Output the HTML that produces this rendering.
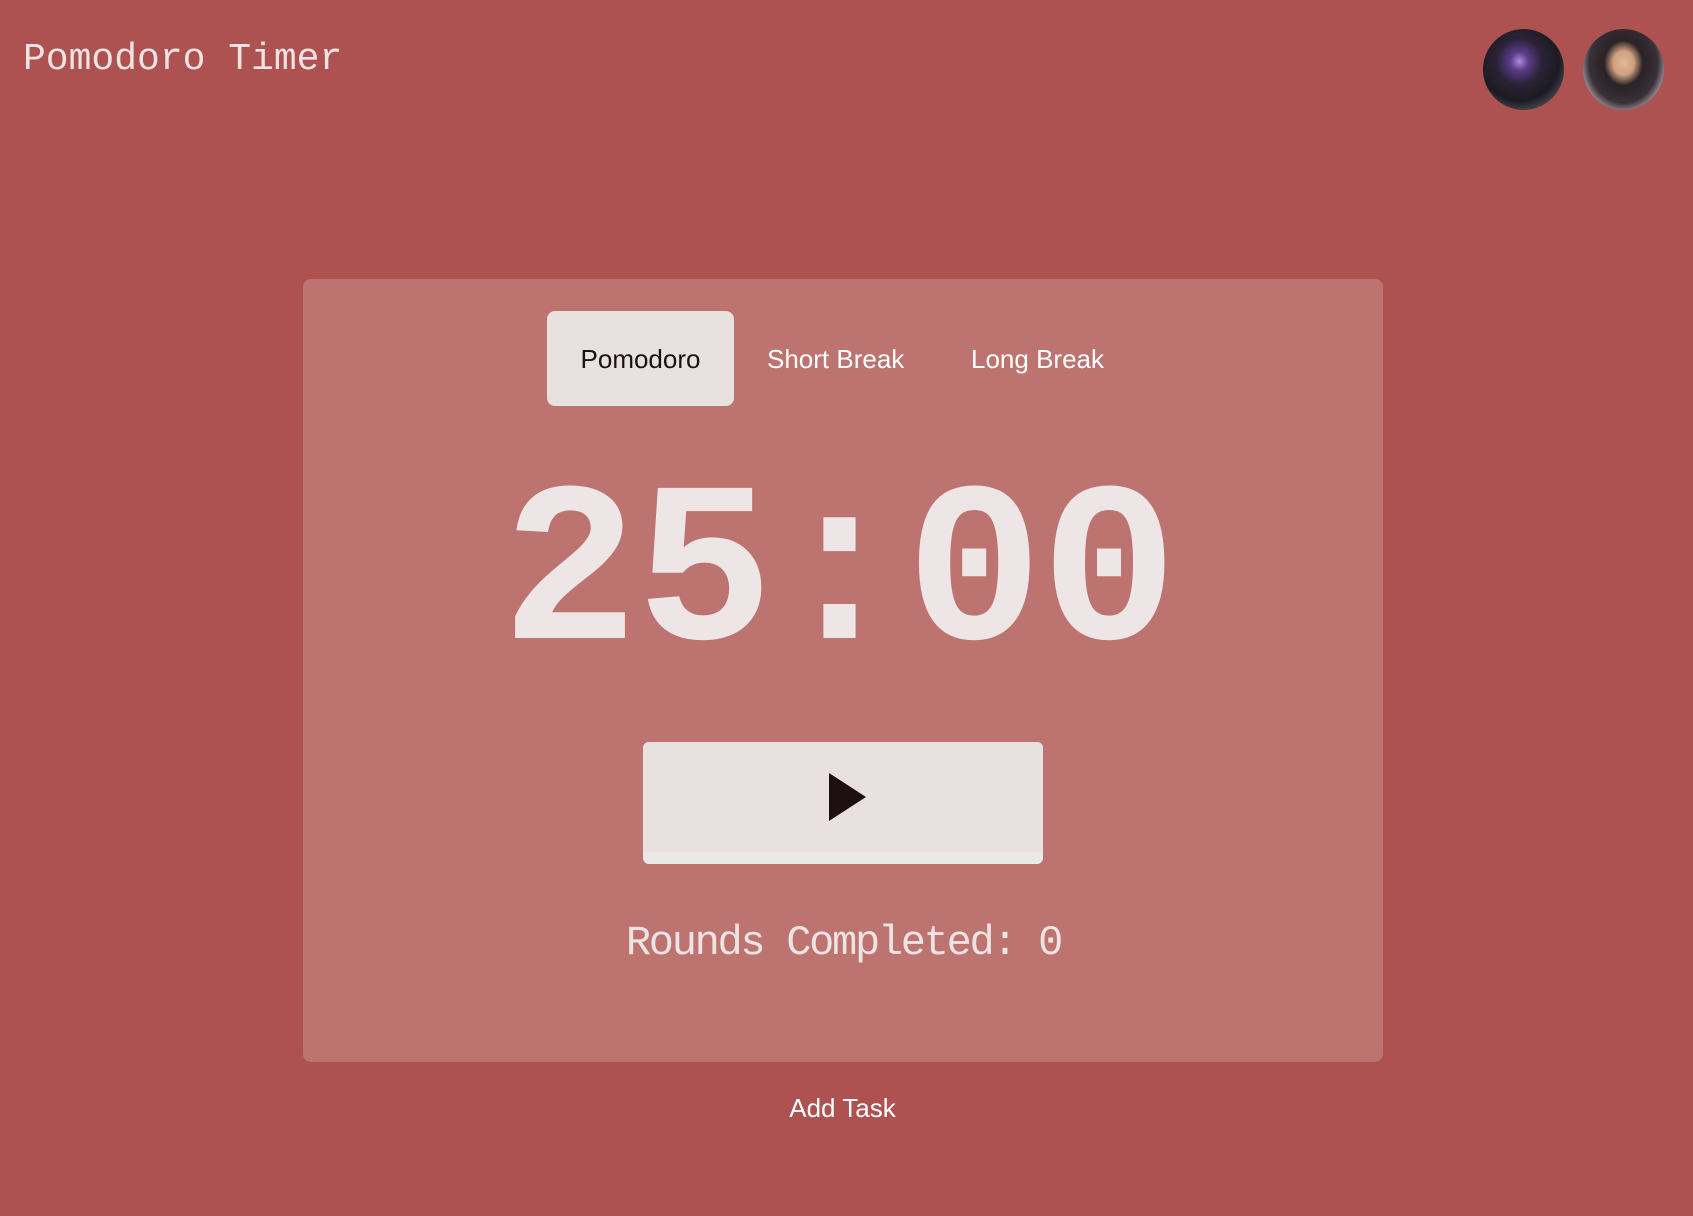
<!DOCTYPE html>
<html><head><meta charset="utf-8"><style>
*{margin:0;padding:0;box-sizing:border-box}
body{width:1693px;height:1216px;background:#ad5250;position:relative;overflow:hidden;font-family:"Liberation Sans",Arial,sans-serif}
.abs{position:absolute;white-space:nowrap}
.title{left:23px;top:38px;font:38px/44px "Liberation Mono",monospace;color:#eee3e3}
.av{position:absolute;width:81px;height:81px;border-radius:50%;top:29px}
.card{position:absolute;left:303px;top:279px;width:1080px;height:783px;background:#bd7471;border-radius:8px}
.tab{position:absolute;font-size:26px;line-height:30px;color:#fff}
.active{left:547px;top:311px;width:187px;height:95px;background:#e9e0e0;border-radius:8px;color:#1c1212;text-align:center;padding-top:33px}
.timer{left:-8px;width:1693px;text-align:center;top:464px;font:bold 228px/228px "Liberation Mono",monospace;color:#eee6e6;letter-spacing:-2px}
.btn{position:absolute;left:643px;top:742px;width:400px;height:122px;background:#ebe8e8;border-radius:6px}
.btn .in{position:absolute;left:0;top:0;width:400px;height:110px;background:#e9e0e0;border-radius:6px 6px 0 0}
.rounds{left:-3px;width:1693px;text-align:center;top:918px;font:42px/50px "Liberation Mono",monospace;color:#eee3e3;letter-spacing:-2.3px}
.add{left:-4px;width:1693px;text-align:center;top:1093px;font-size:26px;line-height:30px;color:#fff}
</style></head><body>
<div class="abs title">Pomodoro Timer</div>
<div class="av" style="left:1483px;background:radial-gradient(circle at 45% 40%,#b08ad8 0,#5a3c8a 14%,#2a2336 35%,#1c1a22 60%,#6b6a70 90%)"></div>
<div class="av" style="left:1583px;background:radial-gradient(ellipse at 50% 42%,#e2b79a 0,#d0a080 18%,#2a2226 34%,#3a3038 60%,#b9b6b8 80%)"></div>
<div class="card"></div>
<div class="tab active">Pomodoro</div>
<div class="abs tab" style="left:767px;top:344px">Short Break</div>
<div class="abs tab" style="left:971px;top:344px">Long Break</div>
<div class="abs timer">25:00</div>
<div class="btn"><div class="in"></div>
<svg style="position:absolute;left:186px;top:31px" width="38" height="48" viewBox="0 0 38 48"><path d="M0 0L37 24L0 48Z" fill="#1e1010"/></svg></div>
<div class="abs rounds">Rounds Completed: 0</div>
<div class="abs add">Add Task</div>
</body></html>
